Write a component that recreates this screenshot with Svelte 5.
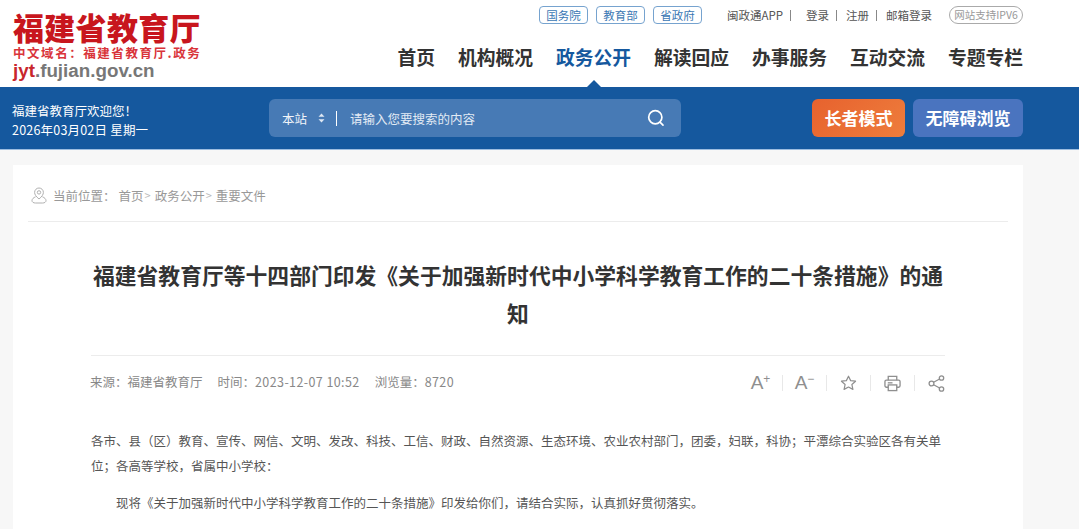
<script>
  const govLinks = ['国务院', '教育部', '省政府'];
  const navItems = ['首页', '机构概况', '政务公开', '解读回应', '办事服务', '互动交流', '专题专栏'];
</script>

<div class="page">
  <header class="top">
    <div class="logo">
      <div class="logo-name">福建省教育厅</div>
      <div class="logo-domain">中文域名：福建省教育厅.政务</div>
      <div class="logo-url"><span class="red">jyt</span>.fujian.gov.cn</div>
    </div>
    <div class="top-right">
      <div class="util">
        <div class="gov">
          {#each govLinks as g}<span class="gov-tag">{g}</span>{/each}
        </div>
        <div class="links">
          <span>闽政通APP</span><i class="sep s1"></i>
          <span>登录</span><i class="sep s2"></i>
          <span>注册</span><i class="sep s3"></i>
          <span>邮箱登录</span>
        </div>
        <span class="ipv6">网站支持IPV6</span>
      </div>
      <nav class="nav">
        {#each navItems as n}
          <span class="nav-item" class:active={n === '政务公开'}>{n}</span>
        {/each}
      </nav>
    </div>
  </header>

  <div class="band">
    <div class="welcome">
      <div>福建省教育厅欢迎您！</div>
      <div class="date">2026年03月02日 星期一</div>
    </div>
    <div class="search">
      <span class="scope">本站</span>
      <svg class="updown" width="7" height="10" viewBox="0 0 7 10"><path d="M3.500 0.500 L6.500 3.800 H.5Z M3.500 9.500 L6.500 6.200 H.5Z" fill="#dfe8f3"/></svg>
      <i class="bar"></i>
      <span class="placeholder">请输入您要搜索的内容</span>
      <svg class="mag" width="18" height="18" viewBox="0 0 18 18" fill="none" stroke="#fff" stroke-width="1.700" stroke-linecap="round"><circle cx="8.300" cy="8.300" r="6.600"/><path d="M13.200 13.400 L16 16.200"/></svg>
    </div>
    <div class="btns">
      <span class="btn orange">长者模式</span>
      <span class="btn blue">无障碍浏览</span>
    </div>
  </div>

  <main class="card">
    <div class="crumb">
      <svg width="16" height="17" viewBox="0 0 16 17" fill="none" stroke="#b0b0b0" stroke-width="1"><path d="M8 12 C5 9.500 3.600 7.500 3.600 5.400 a4.400 4.400 0 0 1 8.800 0 c0 2.100-1.400 4.100-4.400 6.600z"/><circle cx="8" cy="5.400" r="1.700"/><path d="M4.600 9.800 C2.500 10.600 1 12 1 13.600 c0 1.600 1.600 2.400 3.400 2.400 h7.200 c1.800 0 3.400-.8 3.400-2.400 0-1.600-1.500-3-3.600-3.800"/></svg>
      <span class="here">当前位置：</span>
      <span>首页</span><span class="gt">&gt;</span>
      <span>政务公开</span><span class="gt">&gt;</span>
      <span>重要文件</span>
    </div>
    <article class="article">
      <h1>福建省教育厅等十四部门印发《关于加强新时代中小学科学教育工作的二十条措施》的通知</h1>
      <div class="meta">
        <div class="meta-text">
          <span>来源：福建省教育厅</span>
          <span>时间：<span class="num">2023-12-07 10:52</span></span>
          <span>浏览量：<span class="num">8720</span></span>
        </div>
        <div class="tools">
          <span class="tool font-tool">A<sup>+</sup></span>
          <span class="tool font-tool">A<sup>−</sup></span>
          <span class="tool"><svg width="19" height="18" viewBox="0 0 20 19" fill="none" stroke="#8f8f8f" stroke-width="1.400" stroke-linejoin="round"><path d="M10 1.500 L12.500 6.700 18.300 7.400 14 11.300 15.200 17 10 14.200 4.800 17 6 11.300 1.700 7.400 7.500 6.700Z"/></svg></span>
          <span class="tool"><svg width="18" height="17" viewBox="0 0 18 17" fill="none" stroke="#8f8f8f" stroke-width="1.400"><path d="M4.500 5 V1 H13.500 V5"/><rect x="1" y="5" width="16" height="7.500" rx="1.500"/><rect x="4.500" y="10" width="9" height="6" fill="#fff"/><path d="M4 7.800 H9"/></svg></span>
          <span class="tool"><svg width="17" height="17" viewBox="0 0 17 17" fill="none" stroke="#8f8f8f" stroke-width="1.300"><circle cx="3.500" cy="8.500" r="2.400"/><circle cx="13.500" cy="3" r="2.200"/><circle cx="13.500" cy="14" r="2.200"/><path d="M5.600 7.300 L11.600 4 M5.600 9.700 L11.600 13"/></svg></span>
        </div>
      </div>
      <div class="body">
        <p>各市、县（区）教育、宣传、网信、文明、发改、科技、工信、财政、自然资源、生态环境、农业农村部门，团委，妇联，科协；平潭综合实验区各有关单位；各高等学校，省属中小学校：</p>
        <p class="indent">现将《关于加强新时代中小学科学教育工作的二十条措施》印发给你们，请结合实际，认真抓好贯彻落实。</p>
      </div>
    </article>
  </main>
</div>

<style>
  :global(body) { margin: 0; background: #f7f7f7; overflow: hidden; }
  :global(html) { overflow: hidden; }
  .page { height: 529px; overflow: hidden; font-family: "Noto Sans CJK SC", "Liberation Sans", sans-serif; color: #333; }

  .top { height: 87px; background: #fff; display: flex; justify-content: space-between; padding: 0 56px 0 13px; }
  .logo { padding-top: 10px; width: 200px; }
  .logo-name { font-size: 31px; letter-spacing: 0.300px; line-height: 34px; font-weight: 900; color: #c8161d; white-space: nowrap; }
  .logo-domain { font-size: 12.500px; line-height: 16px; margin-top: 1px; font-weight: 700; color: #d9343a; white-space: nowrap; letter-spacing: 1.550px; }
  .logo-url { font-size: 18.800px; line-height: 20px; font-family: "Liberation Sans", sans-serif; font-weight: 700; color: #777; white-space: nowrap; }
  .red { color: #c8262c; }

  .top-right { display: flex; flex-direction: column; align-items: flex-end; }
  .util { display: flex; align-items: center; height: 18px; margin-top: 6px; font-size: 11.500px; }
  .gov { display: flex; gap: 8px; }
  .gov-tag { width: 49px; height: 18px; box-sizing: border-box; border: 1px solid #76a3cf; border-radius: 4px; color: #3c78b4; text-align: center; line-height: 16px; font-size: 11.500px; }
  .links { display: flex; align-items: center; margin-left: 25px; color: #555; white-space: nowrap; }
  .sep { display: block; width: 1px; height: 11px; background: #888; }
  .s1 { margin: 0 15px 0 7px; }
  .s2 { margin: 0 9px 0 7px; }
  .s3 { margin: 0 9px 0 7px; }
  .ipv6 { margin-left: 17px; width: 74px; height: 18px; box-sizing: border-box; border: 1px solid #aaa; border-radius: 9px; color: #999; font-size: 10.500px; line-height: 16px; text-align: center; white-space: nowrap; }

  .nav { display: flex; gap: 23px; margin-top: 20px; }
  .nav-item { position: relative; font-size: 18.750px; line-height: 26px; font-weight: 700; color: #333; white-space: nowrap; }
  .nav-item.active { color: #15589e; }
  .nav-item.active::after { content: ""; position: absolute; left: 50%; margin-left: -7px; bottom: -17px; border: 7px solid transparent; border-top: 0; border-bottom-color: #15589e; }

  .band { height: 62px; background: #15589e; border-bottom: 1px solid #9dbde0; display: flex; align-items: center; padding: 0 56px 0 13px; color: #fff; }
  .welcome { width: 256px; margin-left: -1px; margin-right: 1px; font-size: 12.500px; line-height: 19px; white-space: nowrap; padding-top: 4px; }
  .date { letter-spacing: 0.200px; }
  .search { width: 412px; height: 38px; background: #477ab5; border-radius: 6px; display: flex; align-items: center; padding: 0 16px 0 13px; box-sizing: border-box; font-size: 12.500px; }
  .scope { color: #f2f5fa; }
  .updown { margin-left: 11px; }
  .bar { width: 1px; height: 15px; background: #fff; margin: 0 13px 0 11px; }
  .placeholder { flex: 1; color: #e2eaf4; }
  .btns { display: flex; gap: 8px; margin-left: auto; }
  .btn { height: 38px; border-radius: 6px; font-size: 17px; font-weight: 700; line-height: 38px; text-align: center; white-space: nowrap; }
  .orange { width: 93px; background: linear-gradient(135deg, #e7622e, #ee7d3c); }
  .blue { width: 110px; background: #4a74bf; }

  .card { margin: 15px 56px 0 13px; background: #fff; padding: 0 15px; height: 400px; }
  .crumb { height: 52px; padding: 4px 0 0 3px; border-bottom: 1px solid #ececec; display: flex; align-items: center; font-size: 12.500px; color: #999; white-space: nowrap; }
  .here { margin: 0 3px 0 6px; }
  .gt { color: #bbb; margin: 0 4px 0 1px; font-size: 11px; }

  .article { padding: 0 63px; }
  h1 { margin: 0; padding: 34px 0 23px; font-size: 21.800px; line-height: 38px; font-weight: 700; color: #333; text-align: center; border-bottom: 1px solid #ececec; }
  .meta { height: 54px; display: flex; align-items: center; justify-content: space-between; font-size: 12.500px; color: #888; }
  .meta-text { display: flex; gap: 15px; margin-left: -1px; padding-bottom: 3px; }
  .num { letter-spacing: 0.400px; }
  .tools { display: flex; align-items: center; }
  .tool { display: flex; align-items: center; justify-content: center; width: 17px; height: 16px; padding-left: 13px; margin-left: 13px; border-left: 1px solid #e8e8e8; color: #8f8f8f; }
  .tool:first-child { border-left: 0; padding-left: 0; margin-left: 0; }
  .font-tool { font-family: "Liberation Sans", sans-serif; font-size: 19px; line-height: 16px; }
  .font-tool sup { font-size: 12px; line-height: 0; position: relative; top: -4px; vertical-align: baseline; }

  .body { margin-top: 18px; font-size: 12.500px; line-height: 25px; color: #555; }
  .body p { margin: 0 0 12px; }
  .indent { text-indent: 25px; }
</style>
